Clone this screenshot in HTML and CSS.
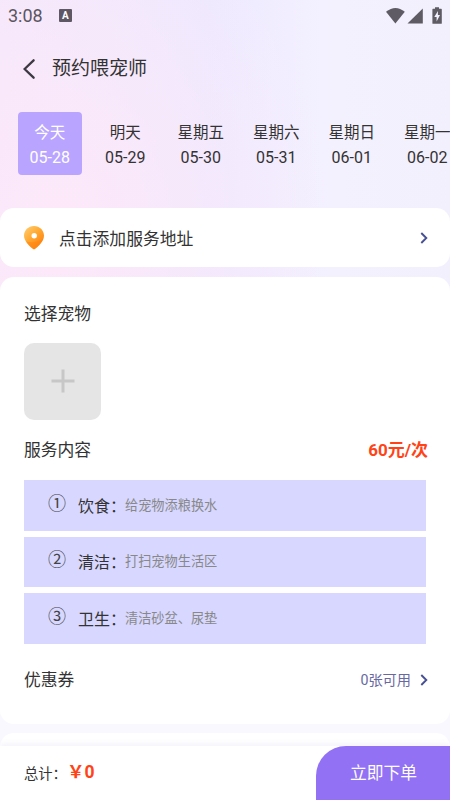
FILE: index.html
```html
<!DOCTYPE html>
<html lang="zh-CN">
<head>
<meta charset="utf-8">
<meta name="viewport" content="width=device-width, initial-scale=1">
<title>预约喂宠师</title>
<link rel="stylesheet" href="styles.css">
</head>
<body>
<div class="screen">
  <div class="status">
    <span class="clock">3:08</span>
    <span class="app-badge">A</span>
    <svg class="system" width="60" height="20" viewBox="0 0 60 20">
      <path d="M1 5.8Q10.5-1.8 19.8 5.8L10.4 17.5Z"/>
      <path d="M37.8 2.5V17.5H22.5Z"/>
      <path fill-rule="evenodd" d="M50 1.2h4v1.6h2.2q.6 0 .6.6v13.800q0 .6-.6.6h-8.200q-.6 0-.6-.6V3.400q0-.6.6-.6H50ZM52.900 5l-3.600 6h2.300v4.500l3.400-6.400h-2.100Z"/>
    </svg>
  </div>
  <header class="titlebar">
    <svg width="12" height="20" viewBox="0 0 12 20"><path class="back" d="M10.600 1.300L1.600 10l9 8.700"/></svg>
    <h1>预约喂宠师</h1>
  </header>
  <nav class="dates">
    <div class="date selected"><span>今天</span><span class="day">05-28</span></div>
    <div class="date"><span>明天</span><span class="day">05-29</span></div>
    <div class="date"><span>星期五</span><span class="day">05-30</span></div>
    <div class="date"><span>星期六</span><span class="day">05-31</span></div>
    <div class="date"><span>星期日</span><span class="day">06-01</span></div>
    <div class="date"><span>星期一</span><span class="day">06-02</span></div>
  </nav>
  <section class="card address">
    <svg class="pin" width="20" height="24" viewBox="0 0 20 24">
      <defs><linearGradient id="pin" x1="0" y1="0" x2=".8" y2="1"><stop offset="0" stop-color="#ffd075"/><stop offset=".45" stop-color="#ffac35"/><stop offset="1" stop-color="#ff7b0a"/></linearGradient></defs>
      <path fill="url(#pin)" d="M10 0C4.300 0 0 4.300 0 9.800c0 5.600 6 10.800 9.200 13.200q.8.600 1.600 0C14 20.600 20 15.400 20 9.800 20 4.300 15.700 0 10 0Z"/>
      <path fill="#ff8510" opacity=".55" d="M19.500 12.500C18 17 13.500 21 10.800 23q-.8.600-1.600 0C7 21.400 4 18.700 2 15.500q10 2.500 17.500-3Z"/>
      <circle cx="10.200" cy="9.700" r="2.700" fill="#fff"/>
    </svg>
    <span class="label">点击添加服务地址</span>
    <svg class="chevron" width="8" height="12" viewBox="0 0 8 12"><path d="M1.300 1l5 5-5 5"/></svg>
  </section>
  <section class="card order">
    <h2>选择宠物</h2>
    <div class="add-pet"><svg width="24" height="24" viewBox="0 0 24 24"><path d="M12 .5v23M.5 12h23"/></svg></div>
    <div class="row service-head"><h2>服务内容</h2><strong>60元/次</strong></div>
    <ul class="services">
      <li><span class="num">①</span><span class="name">饮食：</span><span class="desc">给宠物添粮换水</span></li>
      <li><span class="num">②</span><span class="name">清洁：</span><span class="desc">打扫宠物生活区</span></li>
      <li><span class="num">③</span><span class="name">卫生：</span><span class="desc">清洁砂盆、尿垫</span></li>
    </ul>
    <div class="row coupon">
      <h2>优惠券</h2>
      <span class="available">0张可用</span>
      <svg class="chevron" width="8" height="12" viewBox="0 0 8 12"><path d="M1.300 1l5 5-5 5"/></svg>
    </div>
  </section>
  <section class="card next"></section>
  <footer class="checkout">
    <span class="total">总计：</span><strong>￥0</strong>
    <div class="submit">立即下单</div>
  </footer>
</div>
</body>
</html>
```
FILE: styles.css
```css
* { box-sizing: border-box; }
body { margin: 0; font-family: Roboto, "Noto Sans CJK SC", sans-serif; color: #333; }
h1, h2, ul { margin: 0; padding: 0; font-weight: 400; list-style: none; }
svg { display: block; flex: none; }
.screen {
  width: 450px; height: 800px; overflow: hidden; display: flex; flex-direction: column;
  background:
    linear-gradient(to bottom, transparent 270px, #f9f8ff 500px),
    radial-gradient(ellipse 270px 350px at 60px 235px, #fde8f9, rgba(253,232,249,0)),
    linear-gradient(90deg, #f4e8fc 0, #ede9ff 46%, #f4f1ff 75%, #f3f0fe 100%);
}
.status { height: 32px; display: flex; align-items: center; padding: 0 5px 0 8px; color: #5a565f; }
.clock { font-size: 18px; line-height: 32px; width: 51px; }
.app-badge { width: 12.500px; height: 13px; margin-top: -1px; border-radius: 1px; background: #5d5863; color: #fff; font-size: 10px; font-weight: 700; line-height: 13px; text-align: center; }
.system { margin-left: auto; margin-top: -1px; fill: #5f5b64; }
.titlebar { height: 72px; display: flex; align-items: center; gap: 17px; padding: 1px 0 0 23px; }
.back { fill: none; stroke: #3d3942; stroke-width: 2.300; stroke-linecap: round; }
h1 { font-size: 19px; line-height: 28px; }
.dates { height: 104px; padding: 7.500px 0 0 18px; display: flex; gap: 12px; }
.date { flex: none; width: 63.500px; height: 63.500px; border-radius: 4px; display: flex; flex-direction: column; align-items: center; padding-top: 9px; font-size: 15.500px; line-height: 25px; white-space: nowrap; }
.day { font-size: 16px; margin-top: -1px; }
.selected { background: #b9a5ff; color: #fff; }
.card { background: #fff; border-radius: 14px; flex: none; }
.address { height: 59px; display: flex; align-items: center; padding: 0 22px 0 24px; }
.address .label { margin-left: 15px; font-size: 16.800px; }
.chevron { fill: none; stroke: #475092; stroke-width: 1.900; }
.address .chevron { margin-left: auto; }
.order { height: 447px; margin-top: 10px; padding: 25px 22px 0 24px; }
h2 { font-size: 16.800px; line-height: 25px; }
.add-pet { width: 77px; height: 77px; margin-top: 16px; border-radius: 10px; background: #e5e5e5; display: grid; place-items: center; }
.add-pet svg { margin-top: -2px; }
.add-pet path { fill: none; stroke: #c7c7c7; stroke-width: 3; }
.row { display: flex; align-items: center; }
.service-head { height: 25px; margin-top: 18px; justify-content: space-between; }
strong { color: #ff4316; font-size: 17px; line-height: 21px; font-weight: 700; margin-top: -1px; }
.services { display: grid; gap: 6px; margin: 17px 2px 0 0; }
.services li { height: 50.500px; background: #d7d7ff; display: flex; align-items: center; padding-left: 24px; white-space: nowrap; }
.num { width: 30px; font-size: 18px; line-height: 24px; margin-top: -3px; color: #444; }
.name { width: 47px; font-size: 16px; line-height: 24px; margin-top: 3px; }
.desc { font-size: 13.200px; line-height: 20px; margin-top: 1px; color: #888; }
.coupon { height: 25px; margin-top: 24px; }
.available { margin-left: auto; margin-right: 9px; color: #6869a2; font-size: 14.200px; line-height: 20px; }
.next { height: 60px; margin-top: 9px; }
.checkout { position: absolute; left: 0; top: 746px; width: 450px; height: 54px; display: flex; align-items: center; padding-left: 24px; background: #fff; box-shadow: 0 -2px 6px rgba(120,100,200,.09); }
.total { font-size: 14.300px; margin-top: -1px; }
.checkout strong { font-size: 17.500px; }
.submit { margin-left: auto; width: 134px; height: 54px; border-radius: 30px 0 0 0; background: #9271f5; color: #fff; font-size: 16.800px; line-height: 54px; text-align: center; padding-left: 1px; }
```
